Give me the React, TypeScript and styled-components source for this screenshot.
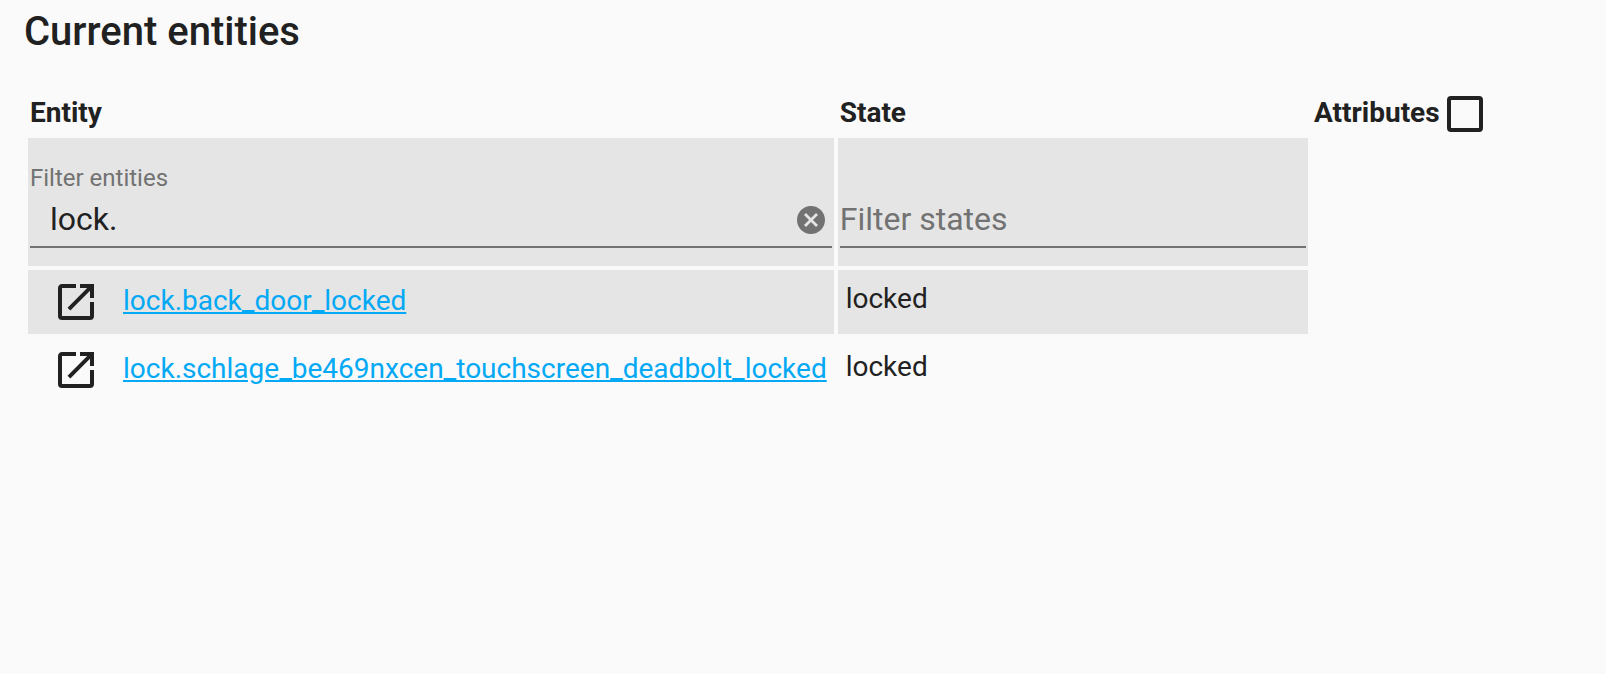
import React, { useState } from "react";
import styled, { createGlobalStyle } from "styled-components";

const GlobalStyle = createGlobalStyle`
  *, *::before, *::after { box-sizing: border-box; }
  body {
    margin: 0;
    background: #fafafa;
    color: #212121;
    font-family: Roboto, "Noto Sans", sans-serif;
    font-size: 28px;
    line-height: 42px;
    -webkit-font-smoothing: antialiased;
  }
`;

const Page = styled.main`
  padding: 4px 24px 24px;
`;

const Title = styled.h1`
  margin: 0 0 30px;
  font-size: 40px;
  font-weight: 500;
  line-height: 56px;
`;

const EntityTable = styled.table`
  width: 100%;
  border-collapse: separate;
  border-spacing: 4px;
`;

const HeaderCell = styled.th<{ $width?: string }>`
  width: ${(p) => p.$width ?? "auto"};
  padding: 2px;
  text-align: left;
  vertical-align: top;
  font-weight: 700;
  line-height: 34px;
  white-space: nowrap;
`;

const AttributesLabel = styled.label`
  display: flex;
  align-items: flex-start;
  gap: 7px;
`;

const Checkbox = styled.input`
  appearance: none;
  width: 36px;
  height: 36px;
  margin: 0;
  border: 4px solid #212121;
  border-radius: 4px;

  &:checked {
    background: #212121;
  }
`;

const Cell = styled.td<{ $shaded?: boolean; $padding?: string }>`
  padding: ${(p) => p.$padding ?? "2px"};
  vertical-align: top;
  white-space: nowrap;
  background: ${(p) => (p.$shaded ? "#e5e5e5" : "transparent")};
`;

const Field = styled.div`
  padding: 16px 0;
`;

const FieldLabel = styled.label`
  display: block;
  height: 40px;
  color: #727272;
  font-size: 24px;
  line-height: 44px;
`;

const FieldLine = styled.div`
  display: flex;
  align-items: center;
  padding-bottom: 2px;
  border-bottom: 2px solid #727272;
`;

const FieldInput = styled.input<{ $indent?: boolean }>`
  flex: 1;
  min-width: 0;
  height: 48px;
  padding: 0 0 2px ${(p) => (p.$indent ? "20px" : "0")};
  border: 0;
  outline: 0;
  background: transparent;
  color: #212121;
  font: inherit;
  font-size: 32px;
  line-height: 46px;

  &::placeholder {
    color: #727272;
    opacity: 1;
  }
`;

const IconButton = styled.button`
  display: flex;
  flex: none;
  padding: 0;
  border: 0;
  background: none;
  color: inherit;
  cursor: pointer;
`;

const ClearButton = styled(IconButton)`
  padding: 0 7px;
  color: #727272;
`;

const EntityName = styled.div`
  display: flex;
  align-items: flex-start;
  gap: 23px;
  padding: 6px 5px 6px 22px;
`;

const EntityLink = styled.a`
  color: #03a9f4;
  line-height: 46px;
  text-decoration: underline;
`;

function OpenIcon() {
  return (
    <svg width="48" height="48" viewBox="0 0 24 24" fill="currentColor" aria-hidden="true">
      <path d="M14,3V5H17.59L7.76,14.83L9.17,16.24L19,6.41V10H21V3M19,19H5V5H12V3H5C3.89,3 3,3.9 3,5V19A2,2 0 0,0 5,21H19A2,2 0 0,0 21,19V12H19V19Z" />
    </svg>
  );
}

function ClearIcon() {
  return (
    <svg width="28" height="28" viewBox="2 2 20 20" fill="currentColor" aria-hidden="true">
      <path d="M12,2C17.53,2 22,6.47 22,12C22,17.53 17.53,22 12,22C6.47,22 2,17.53 2,12C2,6.47 6.47,2 12,2M15.59,7L12,10.59L8.41,7L7,8.41L10.59,12L7,15.59L8.41,17L12,13.41L15.59,17L17,15.59L13.41,12L17,8.41L15.59,7Z" />
    </svg>
  );
}

const entities = [
  { id: "lock.back_door_locked", state: "locked" },
  { id: "lock.schlage_be469nxcen_touchscreen_deadbolt_locked", state: "locked" },
];

export default function App() {
  const [entityFilter, setEntityFilter] = useState("lock.");
  const [stateFilter, setStateFilter] = useState("");
  const visible = entities.filter(
    (e) => e.id.includes(entityFilter) && e.state.includes(stateFilter)
  );

  return (
    <>
      <GlobalStyle />
      <Page>
        <Title>Current entities</Title>
        <EntityTable>
          <thead>
            <tr>
              <HeaderCell $width="1px">Entity</HeaderCell>
              <HeaderCell>State</HeaderCell>
              <HeaderCell $width="266px">
                <AttributesLabel>
                  Attributes
                  <Checkbox type="checkbox" />
                </AttributesLabel>
              </HeaderCell>
            </tr>
          </thead>
          <tbody>
            <tr>
              <Cell $shaded>
                <Field>
                  <FieldLabel htmlFor="entity-filter">Filter entities</FieldLabel>
                  <FieldLine>
                    <FieldInput
                      id="entity-filter"
                      $indent
                      value={entityFilter}
                      onChange={(e) => setEntityFilter(e.target.value)}
                    />
                    <ClearButton
                      type="button"
                      aria-label="Clear entity filter"
                      onClick={() => setEntityFilter("")}
                    >
                      <ClearIcon />
                    </ClearButton>
                  </FieldLine>
                </Field>
              </Cell>
              <Cell $shaded>
                <Field>
                  <FieldLabel htmlFor="state-filter" />
                  <FieldLine>
                    <FieldInput
                      id="state-filter"
                      aria-label="Filter states"
                      placeholder="Filter states"
                      value={stateFilter}
                      onChange={(e) => setStateFilter(e.target.value)}
                    />
                  </FieldLine>
                </Field>
              </Cell>
            </tr>
            {visible.map((entity, index) => (
              <tr key={entity.id}>
                <Cell $shaded={index % 2 === 0}>
                  <EntityName>
                    <IconButton type="button" aria-label={`More info for ${entity.id}`}>
                      <OpenIcon />
                    </IconButton>
                    <EntityLink href={`#${entity.id}`}>{entity.id}</EntityLink>
                  </EntityName>
                </Cell>
                <Cell $shaded={index % 2 === 0} $padding="8px">
                  {entity.state}
                </Cell>
              </tr>
            ))}
          </tbody>
        </EntityTable>
      </Page>
    </>
  );
}
